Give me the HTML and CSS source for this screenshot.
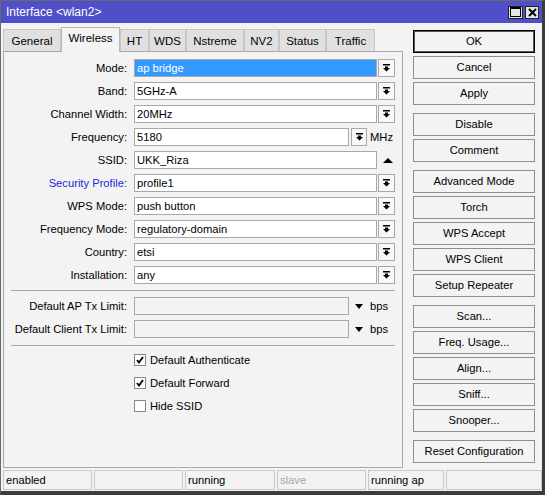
FILE: index.html
```html
<!DOCTYPE html>
<html lang="en">
<head>
    <meta charset="UTF-8">
    <title>Interface &lt;wlan2&gt;</title>
    <link rel="stylesheet" href="styles.css">
</head>
<body>
    <div class="window">
        <div class="titlebar">
            <span class="title">Interface &lt;wlan2&gt;</span>
            <div class="title-buttons">
                <span class="tbtn max">
                    <svg width="11" height="10" viewBox="0 0 11 10"><rect x="0.5" y="0.5" width="10" height="9" fill="none" stroke="#000"/><rect x="0" y="0" width="11" height="2" fill="#000"/></svg>
                </span>
                <span class="tbtn close">
                    <svg width="9" height="9" viewBox="0 0 9 9"><path d="M1 1L8 8M8 1L1 8" stroke="#000" stroke-width="2"/></svg>
                </span>
            </div>
        </div>

        <div class="main">
            <div class="left">
                <div class="tabs">
                    <div class="tab" style="width:58px">General</div>
                    <div class="tab active" style="width:59px">Wireless</div>
                    <div class="tab" style="width:29px">HT</div>
                    <div class="tab" style="width:37px">WDS</div>
                    <div class="tab" style="width:58px">Nstreme</div>
                    <div class="tab" style="width:35px">NV2</div>
                    <div class="tab" style="width:47px">Status</div>
                    <div class="tab" style="width:49px">Traffic</div>
                </div>

                <div class="panel">
                    <div class="group">
                        <div class="row">
                            <label class="label">Mode:</label>
                            <div class="field selected">ap bridge</div>
                            <span class="dd"><svg width="7" height="8" viewBox="0 0 7 8"><rect width="7" height="1.5"/><path d="M2 2.5h3v1.5h2L3.5 7.5 0 4h2z"/></svg></span>
                        </div>
                        <div class="row">
                            <label class="label">Band:</label>
                            <div class="field">5GHz-A</div>
                            <span class="dd"><svg width="7" height="8" viewBox="0 0 7 8"><rect width="7" height="1.5"/><path d="M2 2.5h3v1.5h2L3.5 7.5 0 4h2z"/></svg></span>
                        </div>
                        <div class="row">
                            <label class="label">Channel Width:</label>
                            <div class="field">20MHz</div>
                            <span class="dd"><svg width="7" height="8" viewBox="0 0 7 8"><rect width="7" height="1.5"/><path d="M2 2.5h3v1.5h2L3.5 7.5 0 4h2z"/></svg></span>
                        </div>
                        <div class="row">
                            <label class="label">Frequency:</label>
                            <div class="field short">5180</div>
                            <span class="dd small"><svg width="7" height="8" viewBox="0 0 7 8"><rect width="7" height="1.5"/><path d="M2 2.5h3v1.5h2L3.5 7.5 0 4h2z"/></svg></span>
                            <span class="unit">MHz</span>
                        </div>
                        <div class="row">
                            <label class="label">SSID:</label>
                            <div class="field">UKK_Riza</div>
                            <span class="arrow-up"></span>
                        </div>
                        <div class="row">
                            <label class="label link">Security Profile:</label>
                            <div class="field">profile1</div>
                            <span class="dd"><svg width="7" height="8" viewBox="0 0 7 8"><rect width="7" height="1.5"/><path d="M2 2.5h3v1.5h2L3.5 7.5 0 4h2z"/></svg></span>
                        </div>
                        <div class="row">
                            <label class="label">WPS Mode:</label>
                            <div class="field">push button</div>
                            <span class="dd"><svg width="7" height="8" viewBox="0 0 7 8"><rect width="7" height="1.5"/><path d="M2 2.5h3v1.5h2L3.5 7.5 0 4h2z"/></svg></span>
                        </div>
                        <div class="row">
                            <label class="label">Frequency Mode:</label>
                            <div class="field">regulatory-domain</div>
                            <span class="dd"><svg width="7" height="8" viewBox="0 0 7 8"><rect width="7" height="1.5"/><path d="M2 2.5h3v1.5h2L3.5 7.5 0 4h2z"/></svg></span>
                        </div>
                        <div class="row">
                            <label class="label">Country:</label>
                            <div class="field">etsi</div>
                            <span class="dd"><svg width="7" height="8" viewBox="0 0 7 8"><rect width="7" height="1.5"/><path d="M2 2.5h3v1.5h2L3.5 7.5 0 4h2z"/></svg></span>
                        </div>
                        <div class="row">
                            <label class="label">Installation:</label>
                            <div class="field">any</div>
                            <span class="dd"><svg width="7" height="8" viewBox="0 0 7 8"><rect width="7" height="1.5"/><path d="M2 2.5h3v1.5h2L3.5 7.5 0 4h2z"/></svg></span>
                        </div>
                    </div>

                    <div class="sep"></div>

                    <div class="group">
                        <div class="row">
                            <label class="label">Default AP Tx Limit:</label>
                            <div class="field short disabled"></div>
                            <span class="arrow-down"></span>
                            <span class="unit">bps</span>
                        </div>
                        <div class="row">
                            <label class="label">Default Client Tx Limit:</label>
                            <div class="field short disabled"></div>
                            <span class="arrow-down"></span>
                            <span class="unit">bps</span>
                        </div>
                    </div>

                    <div class="sep sep-2"></div>

                    <div class="group">
                        <div class="check-row">
                            <span class="box"><svg width="10" height="10" viewBox="0 0 10 10"><path d="M2 5l2 2.5L8 2" fill="none" stroke="#000" stroke-width="1.8"/></svg></span>
                            Default Authenticate
                        </div>
                        <div class="check-row">
                            <span class="box"><svg width="10" height="10" viewBox="0 0 10 10"><path d="M2 5l2 2.5L8 2" fill="none" stroke="#000" stroke-width="1.8"/></svg></span>
                            Default Forward
                        </div>
                        <div class="check-row">
                            <span class="box"></span>
                            Hide SSID
                        </div>
                    </div>
                </div>
            </div>

            <div class="buttons">
                <div class="bgroup">
                    <div class="btn default">OK</div>
                    <div class="btn">Cancel</div>
                    <div class="btn">Apply</div>
                </div>
                <div class="bgroup">
                    <div class="btn">Disable</div>
                    <div class="btn">Comment</div>
                </div>
                <div class="bgroup">
                    <div class="btn">Advanced Mode</div>
                    <div class="btn">Torch</div>
                    <div class="btn">WPS Accept</div>
                    <div class="btn">WPS Client</div>
                    <div class="btn">Setup Repeater</div>
                </div>
                <div class="bgroup">
                    <div class="btn">Scan...</div>
                    <div class="btn">Freq. Usage...</div>
                    <div class="btn">Align...</div>
                    <div class="btn">Sniff...</div>
                    <div class="btn">Snooper...</div>
                </div>
                <div class="bgroup">
                    <div class="btn">Reset Configuration</div>
                </div>
            </div>
        </div>

        <div class="statusbar">
            <div class="cell" style="width:89px">enabled</div>
            <div class="cell" style="width:89px"></div>
            <div class="cell" style="width:90px">running</div>
            <div class="cell muted" style="width:89px">slave</div>
            <div class="cell" style="width:76px">running ap</div>
            <div class="cell fill"></div>
        </div>
    </div>
</body>
</html>
```

FILE: styles.css
```css
body {
    margin: 0;
    background: #fff;
    font-family: 'Liberation Sans', Arial, sans-serif;
    font-size: 11.2px;
    color: #000;
}
.window {
    width: 545px;
    height: 495px;
    box-sizing: border-box;
    border: 1px solid #6a6a6a;
    border-right: 3px solid #3c3c3c;
    border-bottom: 4px solid #3c3c3c;
    background: #f3f3f3;
    display: flex;
    flex-direction: column;
}
.titlebar {
    height: 22px;
    flex: none;
    background: #4f4fc9;
    color: #fff;
    display: flex;
    align-items: center;
    justify-content: space-between;
    padding: 0 3px 0 5px;
    font-size: 12px;
}
.title-buttons {
    display: flex;
    gap: 2px;
}
.tbtn {
    height: 13px;
    box-sizing: border-box;
    border: 1px solid #222;
    background: #e6e6e6;
    display: flex;
    align-items: center;
    justify-content: center;
}
.tbtn.max {
    width: 15px;
}
.tbtn.close {
    width: 14px;
}
.main {
    flex: 1;
    display: flex;
    padding: 4px 0 0 2px;
}
.left {
    width: 400px;
    display: flex;
    flex-direction: column;
}
.tabs {
    display: flex;
    align-items: flex-end;
    height: 25px;
    margin-bottom: -1px;
    position: relative;
    z-index: 1;
}
.tab {
    height: 22px;
    margin-bottom: 1px;
    box-sizing: border-box;
    border: 1px solid #c6c6c6;
    border-bottom: none;
    background: #e0e0e0;
    text-align: center;
    line-height: 22px;
    font-size: 11.5px;
}
.tab.active {
    height: 25px;
    margin-bottom: 0;
    background: #f3f3f3;
    border-color: #b8b8b8;
    line-height: 21px;
}
.panel {
    height: 417px;
    box-sizing: border-box;
    border: 1px solid #a8a8a8;
    background: #f3f3f3;
    padding-top: 7px;
}
.group {
    display: flex;
    flex-direction: column;
    gap: 5px;
}
.row {
    display: flex;
    align-items: center;
    height: 18px;
}
.label {
    width: 123px;
    flex: none;
    text-align: right;
    margin-right: 7px;
}
.label.link {
    color: #2626d8;
}
.field {
    width: 243px;
    height: 18px;
    box-sizing: border-box;
    border: 1px solid #a8a8a8;
    background: #fff;
    padding: 0 2px;
    line-height: 16px;
}
.field.short {
    width: 215px;
}
.field.disabled {
    background: #f3f3f3;
}
.field.selected {
    background: #3399ff;
    color: #fff;
}
.dd {
    width: 17px;
    height: 18px;
    margin-left: 1px;
    box-sizing: border-box;
    border: 1px solid #a8a8a8;
    background: #f8f8f8;
    display: flex;
    align-items: center;
    justify-content: center;
}
.dd.small {
    width: 16px;
    margin-left: 2px;
}
.unit {
    margin-left: 3px;
}
.arrow-up {
    margin-left: 6px;
    width: 0;
    height: 0;
    border-left: 5px solid transparent;
    border-right: 5px solid transparent;
    border-bottom: 5px solid #000;
}
.arrow-down {
    margin: 0 6px 0 6px;
    width: 0;
    height: 0;
    border-left: 4px solid transparent;
    border-right: 4px solid transparent;
    border-top: 5px solid #000;
}
.arrow-down + .unit {
    margin-left: 1px;
}
.sep {
    height: 1px;
    background: #a8a8a8;
    margin: 6px 7px 6px 7px;
}
.sep-2 {
    margin: 7px 7px 5px 7px;
}
.check-row {
    display: flex;
    align-items: center;
    height: 18px;
    padding-left: 130px;
    gap: 4px;
}
.box {
    width: 12px;
    height: 12px;
    box-sizing: border-box;
    border: 1px solid #888;
    background: #fff;
    display: flex;
    align-items: center;
    justify-content: center;
}
.buttons {
    width: 122px;
    margin-left: 10px;
    padding-top: 3px;
    display: flex;
    flex-direction: column;
    gap: 8px;
}
.bgroup {
    display: flex;
    flex-direction: column;
    gap: 3px;
}
.btn {
    height: 23px;
    box-sizing: border-box;
    border: 1px solid #8e8e8e;
    background: #f3f3f3;
    text-align: center;
    line-height: 21px;
}
.btn.default {
    border-color: #000;
    box-shadow: inset 0 0 0 1px #555;
}
.statusbar {
    height: 20px;
    flex: none;
    margin-bottom: 1px;
    padding-left: 2px;
    display: flex;
    gap: 2px;
}
.cell {
    box-sizing: border-box;
    border: 1px solid #c8c8c8;
    padding-left: 2px;
    line-height: 18px;
}
.cell.fill {
    flex: 1;
}
.cell.muted {
    color: #a8a8a8;
}
```
